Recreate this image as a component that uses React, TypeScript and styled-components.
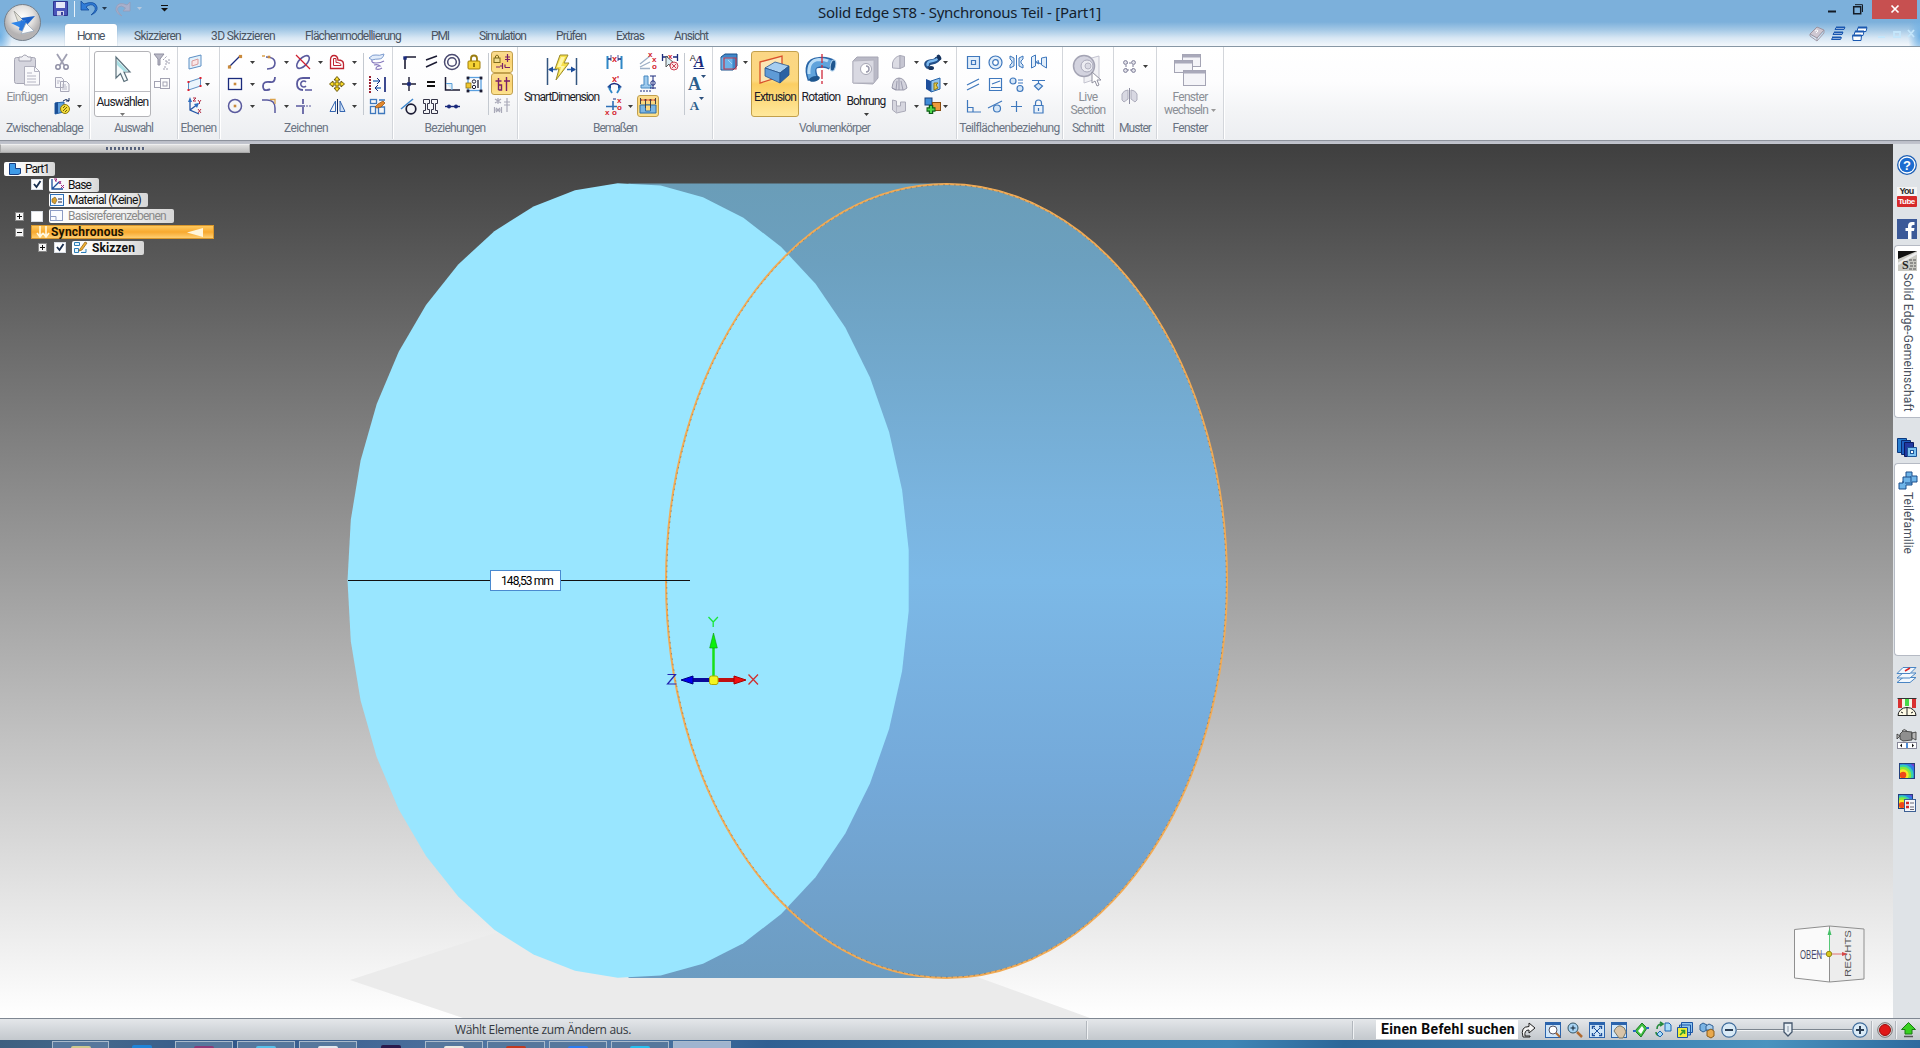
import React, { useLayoutEffect, useRef, useState } from "react";
import styled, { createGlobalStyle, css } from "styled-components";

const Global = createGlobalStyle`
  *{box-sizing:border-box}
  html,body{margin:0;padding:0;overflow:hidden}
  body{font-family:Roboto,"Liberation Sans",sans-serif;font-size:12px;color:#1e1e1e}
`;

/* ---------- text set to a given measure ---------- */
const FitSpan = styled.span`
  display: inline-block;
  white-space: pre;
`;
const Fit = ({ w, children }: { w: number; children: string }) => {
  const ref = useRef<HTMLSpanElement>(null);
  const [ls, setLs] = useState<number | null>(null);
  useLayoutEffect(() => {
    if (ref.current && ls === null) {
      const natural = ref.current.getBoundingClientRect().width;
      setLs((w - natural) / Math.max(1, children.length));
    }
  }, [w, children, ls]);
  return (
    <FitSpan ref={ref} style={ls === null ? undefined : { letterSpacing: ls + "px" }}>
      {children}
    </FitSpan>
  );
};

const Svg = styled.svg`
  display: block;
  flex: none;
  overflow: visible;
`;
type IcProps = { w?: number; h?: number; children: React.ReactNode };
const Ic = ({ w = 18, h, children }: IcProps) => (
  <Svg width={w} height={h ?? w} viewBox={`0 0 ${w} ${h ?? w}`} fill="none">
    {children}
  </Svg>
);
const Caret = ({ c = "#3c3c3c" }: { c?: string }) => (
  <Ic w={5} h={3}>
    <path d="M0 0h5L2.5 3z" fill={c} />
  </Ic>
);

/* ---------- frame ---------- */
const Window = styled.div`
  width: 1920px;
  height: 1048px;
  display: grid;
  grid-template-columns: 1920px;
  grid-template-rows: 46px 98px 874px 22px 8px;
  overflow: hidden;
`;
const Header = styled.header`
  display: grid;
  grid-template-columns: 46px 1fr auto;
  background: radial-gradient(ellipse 12px 26px at 100% 36px, #6fb0e4 0, #6fb0e400 100%),
    radial-gradient(ellipse 12px 26px at 0 36px, #6fb0e4 0, #6fb0e400 100%),
    linear-gradient(#7cb0db 0, #7cb0db 22px, #a5c9e6 30px, #d8e7f4 38px, #f4f8fc 46px);
`;
const Orb = styled.div`
  padding: 4px 0 0 4px;
`;
const HeadMid = styled.div`
  display: grid;
  grid-template-rows: 24px 22px;
`;
const QuickRow = styled.div`
  display: grid;
  grid-template-columns: 772px 283px;
`;
const Quick = styled.div`
  display: flex;
  align-items: center;
  height: 17px;
  padding-left: 7px;
`;
const Gap = styled.i<{ w: number }>`
  width: ${(p) => p.w}px;
  flex: none;
`;
const QuickLine = styled.i`
  width: 1px;
  height: 16px;
  background: #e8f2fa;
`;
const Title = styled.div`
  font: 15px/24px "Noto Sans", "Open Sans", sans-serif;
  color: #14202c;
`;
const Tabs = styled.nav`
  display: flex;
  padding-left: 19px;
`;
const Tab = styled.div<{ $on?: boolean }>`
  height: 23px;
  line-height: 25px;
  color: #4a5462;
  padding: 0 15px;
  ${(p) =>
    p.$on &&
    css`
      padding: 0 13px 0 12px;
      margin-right: 2px;
      background: #fff;
      border-radius: 3px 3px 0 0;
      box-shadow: 0 0 1px #6d8fae;
    `}
`;
const Controls = styled.div`
  width: 112px;
  display: grid;
  grid-template-rows: 18px 28px;
`;
const WinRow = styled.div`
  display: flex;
  align-items: center;
  padding-left: 20px;
`;
const CloseBox = styled.div`
  width: 45px;
  height: 19px;
  margin-left: 9px;
  background: #c75050;
  display: flex;
  align-items: center;
  justify-content: center;
`;
const DocRow = styled.div`
  display: flex;
  align-items: center;
  gap: 6px;
  padding: 3px 0 0 1px;
`;

/* ---------- ribbon ---------- */
const RibbonBar = styled.div`
  display: flex;
  border-top: 1px solid #8797a5;
  height: 98px;
  background: linear-gradient(#fff 0, #fdfdfe 35px, #f3f4f6 65px, #eceef1 93px, #8d929c 93px, #8d929c 94px, #b9bcc6 94px, #c6c9d1 98px);
`;
const GroupBox = styled.section<{ w: number }>`
  width: ${(p) => p.w}px;
  height: 92px;
  display: flex;
  flex-direction: column;
  border-right: 1px solid #d3d6db;
  box-shadow: 1px 0 0 #fff;
`;
const GroupBody = styled.div<{ pad: number }>`
  display: flex;
  height: 71px;
  padding: 4px 0 0 ${(p) => p.pad}px;
`;
const GroupLabel = styled.div`
  text-align: center;
  color: #6a7382;
  line-height: 21px;
  white-space: nowrap;
`;
const Group = ({ w, pad = 0, label, lw, children }: { w: number; pad?: number; label: string; lw: number; children: React.ReactNode }) => (
  <GroupBox w={w}>
    <GroupBody pad={pad}>{children}</GroupBody>
    <GroupLabel>
      <Fit w={lw}>{label}</Fit>
    </GroupLabel>
  </GroupBox>
);
const IconGrid = styled.div<{ cols: string; rows?: string }>`
  display: grid;
  grid-template-columns: ${(p) => p.cols};
  grid-auto-rows: ${(p) => p.rows ?? "22px"};
  height: 66px;
  align-items: center;
  justify-items: center;
`;
const On = styled.div`
  width: 22px;
  height: 22px;
  display: flex;
  align-items: center;
  justify-content: center;
  background: linear-gradient(#fbdc90, #fbd473 50%, #fde28f);
  border: 1px solid #c2a04c;
  border-radius: 3px;
`;
const Divider = styled.i`
  width: 1px;
  height: 62px;
  grid-row: 1 / span 3;
  background: #c4c9d0;
`;
const Big = styled.div<{ w: number; $on?: boolean; $off?: boolean }>`
  width: ${(p) => p.w}px;
  height: 66px;
  display: flex;
  flex-direction: column;
  align-items: center;
  padding-top: 2px;
  border: 1px solid transparent;
  border-radius: 3px;
  line-height: 13px;
  white-space: nowrap;
  color: ${(p) => (p.$off ? "#8b8f96" : "#1c1c28")};
  ${(p) =>
    p.$on &&
    css`
      background: linear-gradient(#fbd685 0, #fcd87e 45%, #fbce62 50%, #ffe89c 100%);
      border-color: #c2a04c;
    `}
`;
const BigText = styled.div<{ top?: number }>`
  height: 13px;
  margin-top: ${(p) => p.top ?? 2}px;
`;
const CaretDrop = styled.div`
  margin-top: 5px;
`;
const WechselRow = styled.div`
  display: flex;
  align-items: center;
  gap: 3px;
`;
const Select = styled.div`
  width: 57px;
  height: 66px;
  border: 1px solid #b4b4b8;
  border-radius: 3px;
  background: #fff;
  display: grid;
  grid-template-rows: 40px 1fr;
  justify-items: center;
`;
const SelectTop = styled.div`
  width: 55px;
  border-bottom: 1px solid #bdbdc2;
  padding: 4px 0 0 20px;
`;
const SelectBot = styled.div`
  display: flex;
  flex-direction: column;
  align-items: center;
  gap: 4px;
  line-height: 14px;
  padding-top: 3px;
  color: #1c1c28;
`;

/* ---------- icons: general ---------- */
const N = "#1a2a7c";
const V = "#5a5a9e";
const B = "#3f78bd";
const G = "#a9a9b8";
const Dot = ({ x, y, c = "#c98a3c", r = 1.3 }: { x: number; y: number; c?: string; r?: number }) => (
  <rect x={x - r} y={y - r} width={r * 2} height={r * 2} fill={c} />
);

const Paste = () => (
  <Ic w={28} h={32}>
    <rect x="1.500" y="3.500" width="21" height="26" rx="2" fill="#d5d5de" stroke="#a6a6b4" />
    <path d="M6 7V3h3q2.500-4 6 0h3v4z" fill="#f0f0f4" stroke="#a0a0ae" />
    <path d="M11.500 12.500h10l5 5v13.500h-15z" fill="#fafafc" stroke="#b0b0bd" />
    <path d="M21.500 12.500v5h5M14 19h5M14 22h9M14 25h9M14 28h9" stroke="#b4b4c2" />
  </Ic>
);
const Cut = () => (
  <Ic w={16}>
    <path d="M3 0l7 11M13 0L6 11" stroke="#a0a0b2" strokeWidth="1.800" />
    <circle cx="4" cy="13" r="2.200" stroke="#8e8ea4" strokeWidth="1.500" />
    <circle cx="12" cy="13" r="2.200" stroke="#8e8ea4" strokeWidth="1.500" />
  </Ic>
);
const Copy = () => (
  <Ic w={16}>
    <path d="M1.500 1.500h6l2 2v8h-8z M6.500 5.500h6l2.500 2.500v7.500h-8.500z" fill="#f6f6fa" stroke="#a8a8b8" />
    <path d="M8 9h4M8 11h5M8 13h5M3 5h3M3 7h2" stroke="#b8b8c6" />
  </Ic>
);
const CopyLink = () => (
  <Ic w={17}>
    <path d="M1 5l9-1v10l-9 2z" fill="#5f9fdc" stroke="#2763a8" />
    <path d="M1 5l3-1v11l-3 1z" fill="#1b4f96" />
    <path d="M9 3q3-3 6 0M15 0v3h-3" stroke="#122a5c" />
    <circle cx="11" cy="11" r="4.500" fill="#f2dc3a" stroke="#8f7b10" />
    <path d="M9 13l4-4M9 10l2-2M11 14l2-2" stroke="#705f08" />
  </Ic>
);
const Cursor = () => (
  <Ic w={16} h={28}>
    <path d="M1 1v21l4.500-4.500 3.500 8 3.500-1.500-3.500-8h6z" fill="#f4fafb" stroke="#5a6f7a" strokeWidth="1.200" />
    <path d="M2 4l11 11.500H9L2 9z" fill="#a9dfe4" />
  </Ic>
);
const Filter = () => (
  <Ic w={16}>
    <path d="M0 0h10L6 5v6H4V5z" fill="#b9b9c6" stroke="#8f8fa0" />
    <path d="M9 6l4-4M12 6v5M15 5v5M12 8h3M9 15h6M11 12v3" stroke="#a0a0b0" strokeDasharray="2 1" />
  </Ic>
);
const SelBoxes = () => (
  <Ic w={16} h={12}>
    <rect x=".5" y="3.500" width="6" height="6" stroke="#a2a2b2" />
    <rect x="6.500" y=".5" width="9" height="10" stroke="#a2a2b2" />
    <rect x="9" y="4" width="4" height="4" stroke="#a2a2b2" />
  </Ic>
);
const Plane1 = () => (
  <Ic w={16}>
    <path d="M2 4l12-3v11L2 15z" fill="#e3f1fb" stroke="#5d8fc4" />
    <path d="M5 7l6-2v5l-6 2z" fill="#fbe6e6" stroke="#d99c9c" />
  </Ic>
);
const Plane2 = () => (
  <Ic w={16}>
    <path d="M1.500 6l12-4v8L1.500 14z" fill="#eaf5fc" stroke="#5d8fc4" />
    <Dot x={1.5} y={6} c="#d23" r={1} /><Dot x={13.5} y={2} c="#d23" r={1} /><Dot x={13.5} y={10} c="#d23" r={1} /><Dot x={1.5} y={14} c="#d23" r={1} />
  </Ic>
);
const Csys = () => (
  <Ic w={18}>
    <path d="M4 3v10l9 4M4 13l8-6" stroke="#2355a6" strokeWidth="1.300" />
    <path d="M2 5l2-5 2 5zM8 7l5-1-2 5z" fill="#2d6fc0" />
    <path d="M7 1h3l-3 3h3M12 3l1.500 2L15 3M13.500 5v2M12 12l3 4M15 12l-3 4" stroke="#b23048" />
  </Ic>
);
/* drawing */
const Line = () => (<Ic w={16}><path d="M2 13L13 2" stroke={N} strokeWidth="1.300" /><Dot x={2.5} y={13} r={1.6} /><Dot x={13.5} y={2.5} r={1.6} /></Ic>);
const Arc = () => (<Ic w={16}><path d="M1 2h3" stroke="#dba24c" strokeWidth="1.500" /><path d="M5 3q9 0 9 6t-8 6" stroke={V} strokeWidth="1.600" /><Dot x={8} y={3} /></Ic>);
const Trim = () => (<Ic w={18}><ellipse cx="9" cy="9" rx="8" ry="4" transform="rotate(-45 9 9)" stroke={V} strokeWidth="1.600" /><path d="M2 2l14 14" stroke="#d02030" strokeWidth="1.300" /></Ic>);
const Offset = () => (<Ic w={16}><path d="M1.500 6q0-4.500 3.500-4.500t4 4.500q5.500 0 5.500 4v4.500h-13z" stroke="#c02430" strokeWidth="1.300" /><path d="M4.500 4.500v7h7.500q0-3-5-3v-4z" stroke="#c02430" /></Ic>);
const RectI = () => (<Ic w={16} h={14}><rect x="1.500" y="1.500" width="13" height="11" stroke={N} strokeWidth="1.300" /><Dot x={8} y={7} /></Ic>);
const Curve = () => (<Ic w={16}><path d="M14 1q0 6-5 5Q2 5 2 10t4 4q2 0 3-1" stroke={V} strokeWidth="1.800" /></Ic>);
const Slot = () => (<Ic w={17}><path d="M15 2H8q-6 0-6 6t6 6" stroke={V} strokeWidth="1.800" /><path d="M11 6a3 3 0 1 0 0 4M10 14h7" stroke={V} strokeWidth="1.500" /></Ic>);
const Move = () => (<Ic w={16}><path d="M8 .5l3 3.500H9v3h3V5l3.500 3L12 11V9H9v3h2l-3 3.500L5 12h2V9H4v2L.5 8 4 5v2h3V4H5z" fill="#f6d929" stroke="#6e5a10" /></Ic>);
const CircleI = () => (<Ic w={16}><circle cx="8" cy="8" r="6.500" stroke={V} strokeWidth="1.500" /><Dot x={8} y={8} /></Ic>);
const Fillet = () => (<Ic w={16}><path d="M1 2h5q8 0 8 8v5" stroke={V} strokeWidth="1.500" /><path d="M9 1.500h5V6" stroke="#dba24c" strokeWidth="1.300" /></Ic>);
const Extend = () => (<Ic w={16}><path d="M1 8h9M8 1v5M8 9v7" stroke={V} strokeWidth="1.700" /><path d="M11 8h5" stroke={V} strokeDasharray="2 1" /></Ic>);
const Mirror = () => (<Ic w={17}><path d="M6.500 3v10.500H1z" stroke="#3565b0" /><path d="M11 3v10.500H16z" stroke="#3565b0" fill="#cfe0f5" /><path d="M8.500 1v15" stroke="#102a60" /></Ic>);
const Surf = () => (<Ic w={18}><path d="M1 5q4-4 7-3t8-1q-1 5-5 5T4 7z" fill="#e2ecfa" stroke="#7d9ccf" /><path d="M4 7q-1 3 4 3t8-2M6 12q4-1 6 1-4 0-4 3 3 1 6-1" stroke="#8779bd" strokeWidth="1.200" /></Ic>);
const DimArr = () => (<Ic w={17}><path d="M1 0v17" stroke="#9b1f30" strokeWidth="2" strokeDasharray="2 1" /><path d="M16 1v15" stroke={N} strokeWidth="1.700" /><path d="M4 5h6M12 12H7" stroke={B} strokeWidth="1.500" /><path d="M8 2l3 3-3 3M9 9l-3 3 3 3" stroke={N} /></Ic>);
const Sketch = () => (<Ic w={17}><rect x="1.500" y="1.500" width="6" height="4" stroke={B} strokeWidth="1.300" /><rect x="1.500" y="8.500" width="5" height="7" stroke={B} strokeWidth="1.300" /><path d="M9.500 9v6.500h6V9z M10 2h6" stroke={B} strokeWidth="1.300" /><path d="M6 9l3-3 5-3 2 2-4 4-4 1z" fill="#e2872d" stroke="#8d4c10" strokeWidth=".7" /></Ic>);
/* relations */
const K = "#1c1c34";
const Connect = () => (<Ic w={16}><path d="M4 15V5q0-2 2-2h9" stroke={K} strokeWidth="1.600" /><Dot x={4} y={4} c={N} r={1.7} /></Ic>);
const Parallel = () => (<Ic w={16}><path d="M3 6l11-4M3 13l11-5" stroke={K} strokeWidth="1.500" /></Ic>);
const Concentric = () => (<Ic w={18}><circle cx="9" cy="9" r="7.500" stroke="#4a4a70" strokeWidth="1.500" /><circle cx="9" cy="9" r="4.300" stroke="#4a4a70" strokeWidth="1.500" /></Ic>);
const Lock = () => (<Ic w={14} h={16}><path d="M4 8V4.500a3 3 0 0 1 6 0V8" stroke="#9a7c10" strokeWidth="1.800" /><rect x="1" y="7" width="12" height="8" rx="1" fill="#f5d335" stroke="#a07d08" /><path d="M7 9v4" stroke="#6e5300" strokeWidth="1.500" /></Ic>);
const HV = () => (<Ic w={16}><path d="M1 8h14M8 1v14" stroke={K} strokeWidth="1.400" /><Dot x={8} y={8} c={N} r={1.8} /></Ic>);
const Equal = () => (<Ic w={12}><path d="M2 4h8M2 8h8" stroke="#111" strokeWidth="2" /></Ic>);
const Perp = () => (<Ic w={16}><path d="M1.500 1v13H16" stroke={K} strokeWidth="1.500" /><path d="M2 7.500h6V14" stroke="#5c9fd8" fill="#d8ebf8" /></Ic>);
const Rigid = () => (<Ic w={17}><rect x="2" y="1.500" width="13" height="13" stroke="#5aa0e0" strokeWidth="1.300" /><Dot x={2} y={2} c={K} r={1.4} /><Dot x={15} y={2} c={K} r={1.4} /><Dot x={2} y={15} c={K} r={1.4} /><Dot x={15} y={15} c={K} r={1.4} /><circle cx="8" cy="5.500" r="1.700" stroke={K} /><circle cx="8" cy="11" r="1.700" stroke={K} /><path d="M12 4v8" stroke={K} strokeWidth="1.300" /><rect x="0" y="7" width="5" height="5" fill="#f0c832" stroke="#8f7310" strokeWidth=".8" /></Ic>);
const Tangent = () => (<Ic w={17}><circle cx="10" cy="11" r="4.800" stroke={K} strokeWidth="1.700" /><path d="M0 11L12 1" stroke="#3d86cc" strokeWidth="1.500" /></Ic>);
const Symm = () => (<Ic w={17}><path d="M1.500 1.500h6v4h-2v6h2v4h-6v-3h2v-7h-2zM15.500 1.500h-6v4h2v6h-2v4h6v-3h-2v-7h2z" stroke="#333346" /></Ic>);
const Colin = () => (<Ic w={17}><path d="M1 8.500h15" stroke={N} strokeWidth="1.400" /><circle cx="5" cy="8.500" r="2" fill={N} /><circle cx="12" cy="8.500" r="2" fill={N} /></Ic>);
const OnLock = () => (<Ic w={18}><rect x="1" y="5" width="6" height="4.500" fill="#f1dc90" stroke="#7d6a1c" /><path d="M2.500 5V3q1.500-2 3 0v2" stroke="#7d6a1c" /><path d="M14.500 1v8M12 4h5M12 6.500h5M3 14h4M9.500 10v6M7 13h2M12 11.500v3M12 14.500h5" stroke="#7a2068" strokeWidth="1.200" /></Ic>);
const OnRel = () => (<Ic w={18}><path d="M5.500 3v12M2.500 6h6M5.500 10h3v5h-3M13.500 2v14M11 6h6" stroke="#7a2068" strokeWidth="1.400" /></Ic>);
const RelOff = () => (<Ic w={18}><path d="M5 1v6M2 2l6 4M8 2L2 6M14 1v14M11 5h6M11 8h6M1.500 10v6M8.500 10v6M2 13h6M3 11l4 4M7 11l-4 4" stroke={G} strokeWidth="1.200" /></Ic>);
/* dimensions */
const SmartDim = () => (
  <Ic w={32} h={32}>
    <path d="M1.500 4v27M30.500 4v27" stroke="#33557f" strokeWidth="1.500" />
    <path d="M3 15.500h8M21 15.500h8" stroke="#2d6db5" strokeWidth="1.600" />
    <path d="M2 15.500l5-3v6zM30 15.500l-5-3v6z" fill="#1c4c9a" />
    <path d="M14 1h8l-4 8h5L10 26l3-11H9z" fill="#f7e04b" stroke="#9a8a2c" />
    <path d="M15 3h4l-4 9h4l-6 9 2-8h-4z" fill="#fff6a8" />
  </Ic>
);
const XText = ({ x, y, t, s = 8 }: { x: number; y: number; t: string; s?: number }) => (
  <text x={x} y={y} fontSize={s} fontWeight="700" fill="#d41c2c" fontFamily="Liberation Sans">{t}</text>
);
const Dim1 = () => (<Ic w={17}><path d="M1.500 2v13M15.500 2v13" stroke="#2f87c6" strokeWidth="2" /><path d="M2 5h3M15 5h-3" stroke={N} strokeWidth="1.500" /><path d="M5 1v6M12 1v6" stroke={N} strokeWidth=".8" /><XText x={6} y={8} t="x" s={9} /></Ic>);
const Dim2 = () => (<Ic w={17}><XText x={6} y={6} t="x'" s={9} /><path d="M3 10q5-5 11 0" stroke={N} strokeWidth="1.300" /><path d="M1 11l4-3v5zM16 11l-4-3v5z" fill="#1c4c9a" /><path d="M3 12l3 5M14 12l-3 5" stroke="#2f87c6" strokeWidth="1.800" /></Ic>);
const Dim3 = () => (<Ic w={18}><path d="M1 9.500h11M8 4v9" stroke="#2f70b6" strokeWidth="1.600" /><path d="M8 2h3" stroke={N} /><XText x={12} y={6} t="x" /><XText x={12} y={12.5} t="o" /><XText x={0} y={18} t="x" /><XText x={7} y={18} t="o" /></Ic>);
const Dim4 = () => (<Ic w={18}><path d="M1 11L11 3M1 14l10-5M1 15.500h10" stroke="#9dafc6" strokeWidth="1.300" /><XText x={9} y={4} t="x" /><XText x={13} y={9} t="x" /><XText x={13} y={16} t="o" /></Ic>);
const Dim5 = () => (<Ic w={18}><path d="M5 1h4v9h3v3H2v-3h3z" fill="#9ecbee" stroke="#4688c0" /><path d="M11 1h6M14 1v13M11 13h6" stroke={N} /><circle cx="14" cy="8" r="2.200" stroke={N} /><path d="M1 16h12" stroke={N} strokeDasharray="2 1" /></Ic>);
const Dim6 = () => (<Ic w={18}><path d="M1 8h16v8H1z" fill="#7db6e2" stroke="#2c6da8" /><path d="M6.500 8h5v6h-5z" fill="#fbd981" stroke="#2c6da8" /><path d="M1.500 1v6M16.500 1v6M6.500 2v9M11.500 2v9" stroke="#444" /><path d="M2 3h14" stroke="#c23a2a" strokeDasharray="1.500 1" strokeWidth="1.400" /></Ic>);
const Dim7 = () => (<Ic w={18}><path d="M1.500 1v7M16.500 1v7M2 4h5M12 4h5" stroke={N} strokeWidth="1.300" /><XText x={7} y={6} t="x" /><path d="M5 3v11l3-3 2 4 2-1-2-4h3z" fill="#dceef4" stroke="#555" /><circle cx="13" cy="13" r="4" fill="#fbe4e6" stroke="#cc4454" /><path d="M11 11l4 4M15 11l-4 4" stroke="#cc4454" /></Ic>);
const Letter = styled.div<{ s: number }>`
  font: italic 700 ${(p) => p.s}px/18px "Liberation Serif", serif;
  color: ${N};
  display: flex;
  u { font-size: 16px; }
  small { font: 9px/10px "Liberation Sans", sans-serif; color: #222; margin-right: -2px; }
`;
const Letter2 = styled(Letter)`
  font-style: normal;
  color: #2b5f8c;
`;
/* solids */
const Cube = () => (<Ic w={18}><path d="M1 4l4-3h12v12l-4 4H1z" fill="#3f87c9" stroke="#1b4f8a" /><path d="M1.500 4.500h11v12h-11z" fill="#6db2e8" /><path d="M4 5h12v11H4z" stroke="#c0394a" strokeWidth="1.200" /><path d="M8 7l4 4" stroke="#a8d6f8" /></Ic>);
const Extrusion = () => (
  <Ic w={34} h={32}>
    <path d="M2 8L24 2v20L2 29z" fill="#fbe6b4" stroke="#d8502c" strokeWidth="1.300" />
    <path d="M7 14l10-6 14 4-9 7z" fill="#a6cef0" stroke="#27568f" strokeWidth=".8" />
    <path d="M7 14l15 5v10L7 22z" fill="#5f9bd6" stroke="#27568f" strokeWidth=".8" />
    <path d="M22 19l9-7v9l-9 8z" fill="#2b62a4" stroke="#27568f" strokeWidth=".8" />
  </Ic>
);
const Rotation = () => (
  <Ic w={32} h={32}>
    <path d="M8 25Q2 9 14 8.500q8-1 13 2.500" stroke="#2a66a8" strokeWidth="11" />
    <path d="M7.500 24Q3 10 14 8.500q7-1 12 2" stroke="#5fa3dc" strokeWidth="8" />
    <path d="M4 20Q3 6 14 5.500q6 0 9 1.500" stroke="#b9dcf6" strokeWidth="3" />
    <ellipse cx="28" cy="11.500" rx="2.600" ry="5.600" transform="rotate(12 28 11.500)" fill="#1f568f" stroke="#a9cdec" />
    <ellipse cx="9.500" cy="25" rx="5.500" ry="2.600" fill="#1e568f" transform="rotate(-15 9 25)" />
    <path d="M17 0v30" stroke="#d0283a" strokeWidth="1.300" strokeDasharray="9 2 3 2" />
  </Ic>
);
const Hole = () => (
  <Ic w={30} h={32}>
    <path d="M2 7l4-4h21v21l-5 6-20-1z" fill="#b9b9c6" stroke="#a6a6b4" />
    <path d="M2 7l21-1v23H2z" fill="#d9d9e2" stroke="#b4b4c0" />
    <circle cx="15" cy="15" r="5.500" fill="#fff" stroke="#a6a6b4" />
    <path d="M15 12a3 3 0 1 1 0 6" stroke="#9a9aac" strokeWidth="1.500" />
  </Ic>
);
const GSolid = ({ k }: { k: number }) => (
  <Ic w={16}>
    {k === 0 && <><path d="M1.500 14V9Q3 3 9 1.500v13z" fill="#dcdce4" stroke="#aaaab8" /><path d="M9 1.500l4.500 1v10l-4.500 2z" fill="#c6c6d2" stroke="#aaaab8" /></>}
    {k === 1 && <><path d="M1 12Q2 2 8 2t8 10l-3 2H5z" fill="#d2d2dc" stroke="#9c9cac" /><path d="M8 2v12M5 14L6 5M12 14L10 5M1 12l4 2" stroke="#9090a4" strokeWidth=".8" /></>}
    {k === 2 && <><path d="M1.500 2l4 1v5h4V4h5v9l-9 2-4-3z" fill="#d6d6df" stroke="#aaaab8" /><path d="M5.500 8v7" stroke="#b9b9c6" /></>}
  </Ic>
);
const Sweep = () => (<Ic w={17}><path d="M4 13Q-1 9 6 8t7-5" stroke="#234f88" strokeWidth="5.500" /><path d="M3 12q-2-4 4-5t5-3" stroke="#7dbaf0" strokeWidth="2.500" /><ellipse cx="14" cy="3.500" rx="2" ry="3" fill="#16345f" transform="rotate(-30 14 3.500)" /><ellipse cx="6" cy="14" rx="3" ry="2" fill="#16345f" /></Ic>);
const Box3 = () => (<Ic w={17}><path d="M1 3l5 2v11l-5-3z" fill="#1e4f9c" /><path d="M6 5l9-3v11l-9 3z" fill="#8fc2ee" stroke="#2763a8" /><path d="M9 7h4l-2 2 2 3-4 2z" fill="#e8cf4c" stroke="#8d7a1a" /></Ic>);
const BoxPlus = () => (<Ic w={18}><rect x="1" y="1" width="7" height="7" fill="#3f8cd8" stroke="#173f7c" /><rect x="8.500" y="5.500" width="8" height="8" fill="#ee9a3c" stroke="#8a4c10" /><path d="M7 8v9M2.500 12.500h9" stroke="#0f5f18" strokeWidth="4.500" /><path d="M7 9v7M3.500 12.500h7" stroke="#4fd84c" strokeWidth="2" /></Ic>);
/* face relations */
const F = [
  <path key="0" d="M2.500 2.500h12v12h-12zM6.500 6.500h4v4h-4z" stroke={B} fill="#e2eefa" strokeWidth="1.200" />,
  <g key="1" stroke={B} strokeWidth="1.200"><circle cx="8.500" cy="8.500" r="6.500" fill="#e2eefa" /><circle cx="8.500" cy="8.500" r="2.800" fill="#fff" /></g>,
  <path key="2" d="M8.500 1v15M2 2l4 2v8l-4 2v-3l2-2V7L2 5zM15 2l-4 2v8l4 2v-3l-2-2V7l2-2z" stroke={B} fill="#d5e6f7" />,
  <path key="3" d="M1.500 3l4-2v11l-4 2zM11.500 4l5-1v11l-5-3zM5 7l6 3M8 6l1 4-4-2" stroke={B} fill="#e2eefa" />,
  <path key="4" d="M2 9L14 3M2 14l12-6" stroke={B} strokeWidth="1.300" />,
  <path key="5" d="M2.500 2.500h12v12h-12zM5 8l8-3M4 11.500h11" stroke={B} strokeWidth="1.200" />,
  <g key="6" stroke={B} strokeWidth="1.200" fill="#d5e6f7"><circle cx="5" cy="5" r="3" /><circle cx="12" cy="12.500" r="3" /><path d="M10 4h5M10 7h5" /></g>,
  <path key="7" d="M2 4.500h13M8.500 5v2M4.500 10l4-3 4 3-4 4z" stroke={B} fill="#d5e6f7" strokeWidth="1.200" />,
  <path key="8" d="M2.500 2v12H16M3 9.500h5V14" stroke={B} strokeWidth="1.200" />,
  <g key="9" stroke={B} strokeWidth="1.200"><circle cx="10" cy="10.500" r="3.500" fill="#d5e6f7" /><path d="M1 10l14-7" /></g>,
  <path key="10" d="M3 8.500h11M8.500 3v11" stroke={B} strokeWidth="1.200" />,
  <g key="11" stroke={B} strokeWidth="1.200"><path d="M5.500 8V5a3 3 0 0 1 6 0v3" /><path d="M4 7.500h9v7.500H4zM8.500 10v3" fill="#e8f1fb" /></g>,
];
const Live = () => (
  <Ic w={30} h={32}>
    <path d="M11 6l15-4v22l-15 5z" fill="#f1f1f5" stroke="#c4c4d0" />
    <circle cx="11" cy="12" r="10.500" fill="#d3d3df" stroke="#a4a4b4" strokeWidth="1.500" />
    <circle cx="14" cy="12" r="6" fill="#ececf2" stroke="#a9a9ba" />
    <circle cx="15" cy="12" r="3" fill="#dadae4" stroke="#b4b4c2" />
    <path d="M19 18v11l3-2 2 5 2-1-2-5h4z" fill="#fff" stroke="#90909f" />
  </Ic>
);
const Pattern = () => (<Ic w={13}><g stroke="#7c7c96" fill="#e4e4ec"><path d="M3 3h7v7H3z" fill="none" strokeDasharray="2 1" /><circle cx="2.500" cy="2.500" r="1.900" /><circle cx="10.500" cy="2.500" r="1.900" /><circle cx="2.500" cy="10.500" r="1.900" /><circle cx="10.500" cy="10.500" r="1.900" /></g></Ic>);
const MirrorG = () => (<Ic w={17}><path d="M1 12V6q2-4 6-4v9l-4 3zM16 12V6q-2-4-6-4v9l4 3z" fill="#d8d8e2" stroke="#adadbc" /><path d="M8.500 0v16" stroke="#8c8ca0" /></Ic>);
const WinI = ({ x, y }: { x: number; y: number }) => (
  <g><rect x={x + 0.5} y={y + 0.5} width={x === 9 ? 22 : 18} height={x === 9 ? 15 : 12} fill="#f4f4f8" stroke="#a4a4b4" /><path d={`M${x + 1} ${y + 2}h${x === 9 ? 21 : 17}`} stroke="#a9a9ba" strokeWidth="3" /></g>
);
const Windows = () => (<Ic w={33} h={32}><WinI x={8} y={0} /><WinI x={0} y={6} /><WinI x={9} y={16} /></Ic>);

const E = () => <i />;

const Ribbon = () => (
  <RibbonBar>
    <Group w={90} pad={2} label="Zwischenablage" lw={77}>
      <Big w={50} $off><Paste /><BigText top={5}><Fit w={41}>Einfügen</Fit></BigText></Big>
      <IconGrid cols="20px 14px"><Cut /><E /><Copy /><E /><CopyLink /><Caret /></IconGrid>
    </Group>
    <Group w={88} pad={4} label="Auswahl" lw={39}>
      <Select>
        <SelectTop><Cursor /></SelectTop>
        <SelectBot><Fit w={52}>Auswählen</Fit><Caret c="#777" /></SelectBot>
      </Select>
      <IconGrid cols="22px"><Filter /><SelBoxes /></IconGrid>
    </Group>
    <Group w={42} pad={8} label="Ebenen" lw={36}>
      <IconGrid cols="18px 6px"><Plane1 /><E /><Plane2 /><Caret /><Csys /><E /></IconGrid>
    </Group>
    <Group w={173} pad={5} label="Zeichnen" lw={44}>
      <IconGrid cols="20px 14px 20px 14px 20px 14px 20px 14px">
        <Line /><Caret /><Arc /><Caret /><Trim /><Caret /><Offset /><Caret />
        <RectI /><Caret /><Curve /><E /><Slot /><E /><Move /><Caret />
        <CircleI /><Caret /><Fillet /><Caret /><Extend /><E /><Mirror /><Caret />
      </IconGrid>
      <IconGrid cols="5px 22px"><Divider /><Surf /><DimArr /><Sketch /></IconGrid>
    </Group>
    <Group w={125} pad={5} label="Beziehungen" lw={61}>
      <IconGrid cols="22px 21px 22px 22px">
        <Connect /><Parallel /><Concentric /><Lock />
        <HV /><Equal /><Perp /><Rigid />
        <Tangent /><Symm /><Colin /><E />
      </IconGrid>
      <IconGrid cols="6px 22px"><Divider /><On><OnLock /></On><On><OnRel /></On><RelOff /></IconGrid>
    </Group>
    <Group w={195} label="Bemaßen" lw={44}>
      <Big w={87}><SmartDim /><BigText top={5}><Fit w={75}>SmartDimension</Fit></BigText></Big>
      <IconGrid cols="18px 14px 22px 22px">
        <Dim1 /><E /><Dim4 /><Dim7 />
        <Dim2 /><E /><Dim5 /><E />
        <Dim3 /><Caret /><On><Dim6 /></On><E />
      </IconGrid>
      <IconGrid cols="6px 20px">
        <Divider />
        <Letter s={17}><small>A</small><u>A</u></Letter>
        <Letter2 s={18}>A<Caret c="#2b4f7c" /></Letter2>
        <Letter2 s={13}>A<Caret c="#2b4f7c" /></Letter2>
      </IconGrid>
    </Group>
    <Group w={244} pad={5} label="Volumenkörper" lw={71}>
      <IconGrid cols="22px 11px"><Cube /><Caret /></IconGrid>
      <Big w={48} $on><Extrusion /><BigText top={5}><Fit w={42}>Extrusion</Fit></BigText></Big>
      <Big w={44}><Rotation /><BigText top={5}><Fit w={39}>Rotation</Fit></BigText></Big>
      <Big w={46}><Hole /><BigText top={9}><Fit w={39}>Bohrung</Fit></BigText><CaretDrop><Caret /></CaretDrop></Big>
      <IconGrid cols="20px 14px 20px 5px">
        <GSolid k={0} /><Caret /><Sweep /><Caret />
        <GSolid k={1} /><E /><Box3 /><Caret />
        <GSolid k={2} /><Caret /><BoxPlus /><Caret />
      </IconGrid>
    </Group>
    <Group w={106} pad={6} label="Teilflächenbeziehung" lw={100}>
      <IconGrid cols="repeat(4,21.500px)">{F.map((f, i) => <Ic key={i} w={17}>{f}</Ic>)}</IconGrid>
    </Group>
    <Group w={51} label="Schnitt" lw={32}>
      <Big w={50} $off><Live /><BigText top={5}><Fit w={19}>Live</Fit></BigText><BigText top={0}><Fit w={35}>Section</Fit></BigText></Big>
    </Group>
    <Group w={43} pad={5} label="Muster" lw={32}>
      <IconGrid cols="20px 13px" rows="30px"><Pattern /><Caret /><MirrorG /></IconGrid>
    </Group>
    <Group w={67} label="Fenster" lw={35}>
      <Big w={66} $off><Windows /><BigText top={5}><Fit w={35}>Fenster</Fit></BigText><WechselRow><Fit w={44}>wechseln</Fit><Caret c="#999" /></WechselRow></Big>
    </Group>
  </RibbonBar>
);

/* ---------- viewport ---------- */
const Main = styled.main`
  display: grid;
  grid-template-columns: 1893px 27px;
`;
const View = styled.div`
  position: relative;
  height: 874px;
  overflow: hidden;
  background: linear-gradient(#3f3f3f, #fff);
`;
const Scene = styled.svg`
  position: absolute;
  inset: 0;
`;
const DimBox = styled.div`
  position: absolute;
  left: 490px;
  top: 426px;
  width: 71px;
  height: 21px;
  border: 1px solid #4a8ad0;
  background: #fff;
  line-height: 20px;
  padding-left: 10px;
  color: #000;
`;
const Panel = styled.div`
  position: relative;
  width: 250px;
`;
const Grip = styled.div`
  height: 9px;
  background: linear-gradient(#e0e0e0, #bdbdbd);
  border: 1px solid #a9a9a9;
  border-top-color: #eee;
  display: flex;
  justify-content: center;
  padding-top: 2px;
`;
const GripDots = styled.i`
  width: 39px;
  height: 3px;
  background: repeating-linear-gradient(90deg, #56617a 0 2px, #d6d6d6 2px 4px);
`;
const Tree = styled.div`
  padding-top: 8px;
`;
const TreeRow = styled.div<{ pad: number }>`
  display: flex;
  align-items: center;
  height: 15.800px;
  padding-left: ${(p) => p.pad}px;
`;
const Chip = styled.div<{ w: number; $dim?: boolean; $bold?: boolean }>`
  width: ${(p) => p.w}px;
  height: 14px;
  display: flex;
  align-items: center;
  gap: 4px;
  padding-left: 1px;
  border-radius: 2px;
  background: linear-gradient(90deg, #fff, #f2f2f2 60%, #d6d6d6);
  color: ${(p) => (p.$dim ? "#8a8a8a" : "#111")};
  font-weight: ${(p) => (p.$bold ? 700 : 400)};
  line-height: 14px;
`;
const Check = styled.div`
  width: 12px;
  height: 11px;
  background: #fff;
  border: 1px solid #d8dde4;
  margin-right: 6px;
`;
const Expander = styled.div`
  width: 9px;
  height: 9px;
  background: #f4f4f4;
  border: 1px solid #888;
  margin-right: 7px;
`;
const SyncBar = styled.div`
  width: 183px;
  height: 14px;
  display: flex;
  align-items: center;
  gap: 2px;
  padding: 0 10px 0 5px;
  border: 1px solid #d9972c;
  background: linear-gradient(#ffc95e, #f8a92f 50%, #ffcf72);
  font-weight: 700;
  color: #1a1200;
  > span { flex: none; }
  > svg:last-child { margin-left: auto; }
`;
const Tick = () => (<Check><Ic w={10} h={9}><path d="M2 4l2.500 3L8.500 1" stroke="#1a3050" strokeWidth="1.900" /></Ic></Check>);
const Plus = ({ minus }: { minus?: boolean }) => (<Expander><Ic w={7}><path d={minus ? "M1 3.500h5" : "M1 3.500h5M3.500 1v5"} stroke="#111" /></Ic></Expander>);

const facets = (cx: number, cy: number, rx: number, ry: number, n: number) =>
  Array.from({ length: n }, (_, i) => {
    const a = Math.PI + (i * 2 * Math.PI) / n;
    return `${(cx + rx * Math.cos(a)).toFixed(1)},${(cy + ry * Math.sin(a)).toFixed(1)}`;
  }).join(" ");

const Model = () => (
  <Scene width="1893" height="874" viewBox="0 144 1893 874" fill="none">
    <defs>
      <linearGradient id="side" x1="0" y1="184" x2="0" y2="978" gradientUnits="userSpaceOnUse">
        <stop offset="0" stopColor="#6a9db8" />
        <stop offset=".1" stopColor="#6ca0bf" />
        <stop offset=".25" stopColor="#73aacf" />
        <stop offset=".4" stopColor="#7ab4df" />
        <stop offset=".5" stopColor="#7cb9e7" />
        <stop offset=".6" stopColor="#79b2e1" />
        <stop offset=".75" stopColor="#74a9d9" />
        <stop offset=".9" stopColor="#70a1cb" />
        <stop offset="1" stopColor="#6c9cc1" />
      </linearGradient>
    </defs>
    <path d="M350 980L495 933L940 960L980 978L1090 1018H463z" fill="#ebebeb" />
    <path d="M628.500 183.500H946.500A280.500 397 0 0 1 946.500 978H628.500z" fill="url(#side)" />
    <polygon points={facets(628.5, 580.5, 281, 397.5, 41)} fill="#99e6ff" />
    <ellipse cx="946.500" cy="581" rx="280.500" ry="397" stroke="#f2ab55" strokeWidth="2" />
    <ellipse cx="946.500" cy="581" rx="279.700" ry="396.200" stroke="#3a4c5c" strokeWidth=".6" strokeDasharray="1.500 4" opacity=".75" />
    <path d="M348 580.500H690" stroke="#111" />
    <path d="M713.500 678V645" stroke="#18e018" strokeWidth="2.500" />
    <path d="M713.500 633l3.800 15h-7.600z" fill="#0cf00c" stroke="#0a9a0a" strokeWidth=".6" />
    <path d="M712 680H690" stroke="#0a0a9a" strokeWidth="4" />
    <path d="M681 680l12-4v8z" fill="#0000f0" stroke="#000080" />
    <path d="M716 680h20" stroke="#c01010" strokeWidth="4" />
    <path d="M746 680l-12-4v8z" fill="#f01010" stroke="#a00" />
    <rect x="709.500" y="676" width="8.500" height="8.500" rx="2" fill="#f5f520" stroke="#b0a800" />
    <path d="M708.500 617l4.700 5 4.700-5M713.200 622v5" stroke="#19e63a" strokeWidth="1.300" />
    <path d="M748.500 674.500l9.500 10M758 674.500l-9.500 10" stroke="#d03030" strokeWidth="1.300" />
    <path d="M667.500 674.500h8l-8 9.500h9" stroke="#2424b0" strokeWidth="1.200" />
    <g stroke="#8f8f8f">
      <path d="M1794.500 929.500l35-3.500v56l-35-4z" fill="#fafafa" />
      <path d="M1829.500 926l34.500 3v50l-34.500 3z" fill="#ededed" />
    </g>
    <path d="M1829.500 954v-24" stroke="#58c878" /><path d="M1829.500 928l2 7h-4z" fill="#46c068" />
    <path d="M1829 954h-16" stroke="#7c7cd0" /><path d="M1830 954h16" stroke="#e07070" /><path d="M1848 954l-6-2v4z" fill="#d84848" />
    <text x="1800" y="958.500" fontSize="12" fill="#4c4c64" fontFamily="Liberation Sans" textLength="22" lengthAdjust="spacingAndGlyphs">OBEN</text>
    <text transform="translate(1850.500 977) rotate(-90)" fontSize="9" fill="#555" fontFamily="Liberation Sans" textLength="47" lengthAdjust="spacingAndGlyphs">RECHTS</text>
    <circle cx="1829" cy="954" r="2.700" fill="#d8c820" stroke="#958a18" />
  </Scene>
);

/* ---------- sidebar ---------- */
const Side = styled.aside`
  background: #dfe3e7;
  display: flex;
  flex-direction: column;
  align-items: center;
  padding-top: 11px;
`;
const SideTab = styled.div<{ h: number; top?: number }>`
  align-self: stretch;
  height: ${(p) => p.h}px;
  flex: none;
  margin-left: 1px;
  background: #fff;
  border: 1px solid #b5bac4;
  border-right: 0;
  border-radius: 4px 0 0 4px;
  display: flex;
  flex-direction: column;
  align-items: center;
  padding-top: ${(p) => p.top ?? 5}px;
`;
const VText = styled.div`
  writing-mode: vertical-rl;
  font-size: 12px;
  color: #4a5260;
  margin-top: 2px;
  line-height: 18px;
`;
const VGap = styled.i<{ h: number }>`
  height: ${(p) => p.h}px;
  flex: none;
`;
const VFit = ({ h, children }: { h: number; children: string }) => {
  const ref = useRef<HTMLSpanElement>(null);
  const [ls, setLs] = useState<number | null>(null);
  useLayoutEffect(() => {
    if (ref.current && ls === null) setLs((h - ref.current.getBoundingClientRect().height) / children.length);
  }, [h, children, ls]);
  return <FitSpan ref={ref} style={ls === null ? undefined : { letterSpacing: ls + "px" }}>{children}</FitSpan>;
};
const YouTube = styled.div`
  width: 20px;
  display: grid;
  grid-template-rows: 9px 11px;
  text-align: center;
  font: 700 9px/9px "Liberation Sans Narrow", "Liberation Sans", sans-serif;
  letter-spacing: -0.800px;
  color: #2a2a2a;
  background: #f4f4f4;
  b { background: #d62a2a; color: #fff; line-height: 11px; border-radius: 1px; font-size: 8px; letter-spacing: -0.500px; }
`;
const Rainbow = ({ s }: { s: number }) => (
  <g>
    <rect x=".5" y=".5" width={s} height={s} fill="#5a3ac8" />
    <clipPath id={"rb" + s}><rect x="1" y="1" width={s - 1} height={s - 1} /></clipPath>
    <g clipPath={`url(#rb${s})`}>
      <circle cx="4" cy={s - 3} r={s * 1.05} fill="#7a38c8" /><circle cx="4" cy={s - 3} r={s * 0.9} fill="#2f7ce8" /><circle cx="4" cy={s - 3} r={s * 0.7} fill="#35d0b0" /><circle cx="4" cy={s - 3} r={s * 0.55} fill="#8ae83a" /><circle cx="4" cy={s - 3} r={s * 0.38} fill="#f8e828" /><circle cx="4" cy={s - 3} r={s * 0.22} fill="#f04818" />
    </g>
    <rect x=".5" y=".5" width={s} height={s} stroke="#24407c" />
  </g>
);
const Sidebar = () => (
  <Side>
    <Ic w={20}><circle cx="10" cy="10" r="9.300" fill="#fff" stroke="#1d5fb4" strokeWidth="1.300" /><circle cx="10" cy="10" r="7.300" fill="#1c6cd0" /><text x="10" y="14.500" textAnchor="middle" fontSize="13" fontWeight="700" fill="#fff" fontFamily="Liberation Sans">?</text></Ic>
    <VGap h={12} />
    <YouTube><span>You</span><b>Tube</b></YouTube>
    <VGap h={12} />
    <Ic w={20}><rect width="20" height="20" fill="#3b5998" /><path d="M11 20v-8H8.500V9H11V7q0-4 4-4h2.500v3H16q-1.500 0-1.500 1.500V9h3l-.5 3h-2.500v8z" fill="#fff" /></Ic>
    <VGap h={6} />
    <SideTab h={173}>
      <Ic w={19} h={20}><rect width="19" height="20" fill="#c9c9c2" /><path d="M0 0h19L0 8z" fill="#111" /><path d="M0 13L19 2" stroke="#eee" strokeWidth="2.500" /><text x="4" y="18" fontSize="12" fontWeight="700" fill="#222" fontFamily="Liberation Serif">S</text><path d="M11 9h7M12 12h6M12 15h6M11 18h7" stroke="#555" strokeDasharray="3 1" /></Ic>
      <VText><VFit h={139}>Solid Edge-Gemeinschaft</VFit></VText>
    </SideTab>
    <VGap h={20} />
    <Ic w={20}><path d="M.5.5h9v14h-9z" fill="#2a7fd0" stroke="#0c3a80" /><path d="M4.500 2.500h9v14h-9z" fill="#1d5fc0" stroke="#0c2a70" /><path d="M7.500 4.500h9v14h-9z" fill="#2138a0" stroke="#0c1a60" /><path d="M10.500 9.500h9v9h-9z" fill="#7cc0f0" stroke="#1c559a" /><rect x="13.500" y="12.500" width="3" height="3" fill="#fff" stroke="#1c559a" /></Ic>
    <VGap h={5} />
    <SideTab h={193} top={7}>
      <Ic w={20} h={19}><g fill="#6fb4e8" stroke="#1c4f8c"><path d="M8 1h6v4h5v6h-5v3h-6v4H1v-6h4V6h3z" /><path d="M8 6h5M7 12h7M13 5v6M5 12v-2" /></g></Ic>
      <VText><VFit h={62}>Teilefamilie</VFit></VText>
    </SideTab>
    <VGap h={10} />
    <Ic w={21} h={18}><g fill="#f2f8fd" stroke="#4a86c4"><path d="M1 16.500l6-5h13l-6 5z" /><path d="M1 12l6-5h13l-6 5z" /><path d="M1 7.500l6-6h13l-6 6z" /></g><path d="M9 5l5-3" stroke="#d22" strokeWidth="1.500" /></Ic>
    <VGap h={14} />
    <Ic w={20} h={19}><path d="M1 1h4v9H1zM15 1h4v9h-4z" fill="#d83030" /><path d="M5 1h10v8H5z" fill="#f4f4e8" /><path d="M8 1h4v7H8z" fill="#48d848" /><path d="M1 17.500a9 8 0 0 1 18 0z" fill="#fffbe6" stroke="#222" /><path d="M10 17V10M4 14l2 1M16 14l-2 1" stroke="#222" /><path d="M.5.500h19" stroke="#333" /></Ic>
    <VGap h={12} />
    <Ic w={20} h={20}><path d="M3 5l3-3 9 1v8l-9 1-3-2z" fill="#8f8f8f" stroke="#333" strokeWidth=".8" /><path d="M15 4l4-1v8l-4-2zM3 7L0 5v5zM5 2q2-3 5 0" fill="#b8b8b8" stroke="#333" strokeWidth=".8" /><rect x=".5" y="13.500" width="19" height="6" fill="#fff" stroke="#889" /><path d="M9 14h2v5H9z" fill="#4c8cd8" /><path d="M3 16.500l2-2v4zM17 16.500l-2-2v4z" fill="#111" /></Ic>
    <VGap h={14} />
    <Ic w={16}><Rainbow s={15} /></Ic>
    <VGap h={15} />
    <Ic w={18}><Rainbow s={14} /><rect x="6.500" y="5.500" width="11" height="12" fill="#f4f6fa" stroke="#3c5f94" /><path d="M8 9h3M8 13h3" stroke="#d02828" strokeWidth="2.500" /><path d="M12 9h4M12 13h4M12 15.500h4" stroke="#667" /></Ic>
  </Side>
);

/* ---------- status bar ---------- */
const Status = styled.footer`
  display: flex;
  align-items: center;
  border-top: 1px solid #7f8792;
  background: linear-gradient(#e4e7ea 0, #d3d7db 50%, #c3c8cd 100%);
  color: #33383e;
`;
const Hint = styled.div`
  width: 1086px;
  flex: none;
  padding-left: 455px;
  font: 12px/20px "Open Sans", "Noto Sans", sans-serif;
`;
const Bar = styled.i<{ gap: number; lead?: number }>`
  width: 2px;
  height: 18px;
  border-left: 1px solid #b2b7bd;
  border-right: 1px solid #f0f2f4;
  margin: 0 ${(p) => p.gap}px 0 ${(p) => p.lead ?? 0}px;
  flex: none;
`;
const Search = styled.div`
  width: 142px;
  height: 19px;
  background: #fff;
  padding-left: 5px;
  font: 700 14px/19px Roboto, sans-serif;
  color: #0a0a0a;
  flex: none;
`;
const StatusIcons = styled.div`
  display: flex;
  align-items: center;
  gap: 6px;
  margin-left: 2px;
  > :first-child { margin-right: 3px; }
`;
const Doc = ({ children }: { children?: React.ReactNode }) => (<Ic w={16}><rect x=".5" y=".5" width="15" height="15" fill="#cfe5f8" stroke="#2b64ad" /><path d="M1 2h14" stroke="#2b64ad" strokeWidth="2" />{children}</Ic>);
const Round = ({ plus }: { plus?: boolean }) => (<Ic w={16}><circle cx="8" cy="8" r="7.200" fill="#d9eaf6" stroke="#3f6c9c" strokeWidth="1.200" /><path d={plus ? "M4 8h8M8 4v8" : "M4 8h8"} stroke="#2c3e54" strokeWidth="2" /></Ic>);
const Track = styled.div`
  width: 115px;
  height: 17px;
  display: flex;
  align-items: center;
  padding-left: 46px;
  margin: 0 -6px;
  background: linear-gradient(#0000 8px, #7c858f 8px, #7c858f 9px, #f2f4f6 9px, #f2f4f6 10px, #0000 10px);
`;
const Taskbar = styled.div`
  display: flex;
  gap: 4px;
  padding-left: 52px;
  background: linear-gradient(100deg, #3d5f80 0, #44688c 5%, #33588a 12%, #5a7ea8 30%, #2f5f92 40%, #3a7aa8 52%, #3f86b6 64%, #2c6698 70%, #3c80b0 84%, #4a93bf 92%, #2d6a9e 100%);
`;
const Task = styled.div<{ c: string; w?: number; $flat?: boolean; $hi?: boolean }>`
  width: ${(p) => p.w ?? 58}px;
  height: 7px;
  margin: 1px ${(p) => (p.$flat ? 1 : 0)}px 0;
  display: flex;
  justify-content: center;
  padding-top: 4px;
  border: ${(p) => (p.$flat ? "0" : "1px solid #a9bacb")};
  border-bottom: 0;
  background: ${(p) => (p.$flat ? "none" : p.$hi ? "#9fb4cf" : "#56779c")};
  i { width: 20px; height: 4px; background: ${(p) => p.c}; border-radius: 2px 2px 0 0; }
`;
const tasks: { c: string; w?: number; flat?: boolean; hi?: boolean }[] = [
  { c: "#cfc98e", w: 57 }, { c: "#2084d8", flat: true, w: 56 }, { c: "#8c3a78" }, { c: "#58c0ea" }, { c: "#e4e8ee" },
  { c: "#2a1a4c", flat: true }, { c: "#eceae2" }, { c: "#c23a20" }, { c: "#2c7cf0" }, { c: "#28c0f0" }, { c: "#9fb4cf", hi: true },
];

export default function App() {
  return (
    <>
      <Global />
      <Window>
        <Header>
          <Orb>
            <Ic w={37}>
              <defs><radialGradient id="orb" cx=".5" cy=".35"><stop offset="0" stopColor="#fff" /><stop offset=".6" stopColor="#e4e2e0" /><stop offset="1" stopColor="#b5b3b4" /></radialGradient></defs>
              <circle cx="18.500" cy="18.500" r="18" fill="url(#orb)" stroke="#75808c" />
              <path d="M10 7l9 9-5 2z" fill="#e4e2d8" stroke="#9a9a96" strokeWidth=".8" />
              <path d="M17 14l14-2-8 9z" fill="#1c62c8" />
              <path d="M7 19l15-3-5 8z" fill="#2f86ea" />
              <path d="M17 16l7 3-3 9-6-2z" fill="#2a78dc" />
              <path d="M22 19l8 8-13 3z" fill="#fafcfe" stroke="#90a4b8" strokeWidth=".7" />
            </Ic>
          </Orb>
          <HeadMid>
            <QuickRow>
              <Quick>
                <Ic w={15}><path d="M.5.5h14v14h-14z" fill="#4a55b8" stroke="#2c3590" /><path d="M3 1h9v6H3z" fill="#e4e8f8" /><path d="M4 10h7v4.500H4z" fill="#d0d4ec" /><path d="M8 11h2v3H8z" fill="#3a449c" /></Ic>
                <Gap w={6} /><QuickLine /><Gap w={5} />
                <Ic w={17}><path d="M1 1v9h8L6 7q5-4 8-1t-1 7l-2 2q7-3 6-8-2-7-13-3z" fill="#2f7cd8" stroke="#144c9c" strokeWidth=".8" /></Ic>
                <Gap w={5} /><Caret c="#24384e" /><Gap w={8} />
                <Ic w={16}><path d="M15 1v9H8l2.500-3Q6 3.500 3.500 6T5 13l2 2Q0 12 1 7 3 0 12 4z" fill="#a9b0cc" stroke="#979db8" strokeWidth=".8" /></Ic>
                <Gap w={6} /><Caret c="#b6c9de" /><Gap w={19} />
                <Ic w={7}><path d="M0 .5h7" stroke="#111" /><path d="M0 3h7L3.500 6.500z" fill="#111" /></Ic>
              </Quick>
              <Title><Fit w={283}>Solid Edge ST8 - Synchronous Teil - [Part1]</Fit></Title>
            </QuickRow>
            <Tabs>
              <Tab $on><Fit w={27}>Home</Fit></Tab>
              <Tab><Fit w={47}>Skizzieren</Fit></Tab>
              <Tab><Fit w={64}>3D Skizzieren</Fit></Tab>
              <Tab><Fit w={96}>Flächenmodellierung</Fit></Tab>
              <Tab><Fit w={18}>PMI</Fit></Tab>
              <Tab><Fit w={47}>Simulation</Fit></Tab>
              <Tab><Fit w={30}>Prüfen</Fit></Tab>
              <Tab><Fit w={28}>Extras</Fit></Tab>
              <Tab><Fit w={34}>Ansicht</Fit></Tab>
            </Tabs>
          </HeadMid>
          <Controls>
            <WinRow>
              <Ic w={8} h={12}><path d="M0 8.500h8" stroke="#141c26" strokeWidth="2" /></Ic>
              <Gap w={17} />
              <Ic w={10}><path d="M.7 2.700h7v7h-7z" stroke="#141c26" strokeWidth="1.500" /><path d="M2 .7h7.500V8" stroke="#141c26" /></Ic>
              <CloseBox><Ic w={8} h={8}><path d="M.5.5l7 7M7.500.5l-7 7" stroke="#fff" strokeWidth="1.700" /></Ic></CloseBox>
            </WinRow>
            <DocRow>
              <Ic w={16}><path d="M1 8l7-7 7 3-7 8z" fill="#cfc8d2" stroke="#9b94a0" /><path d="M1 8v2l7 5 7-8V4M8 12v3" stroke="#a49da9" /><path d="M6 5q2-2 3 0l-2 2" stroke="#fff" /></Ic>
              <Ic w={15}><g fill="#fff" stroke="#1a58b0"><path d="M5 1.500h9l-1 2H4zM3 6.500h9l-1 2H2zM1.500 11.500h9l-1 2H.5z" /></g><path d="M5 1.500h9M3 6.500h9M1 11.500h9" stroke="#1a58b0" strokeWidth="1.800" /></Ic>
              <Ic w={16}><g fill="#fff" stroke="#1a58b0"><path d="M6 1.500h9l-1 4H5zM3 5.500h9l-1 4H2zM.5 9.500h9l-.5 5H1z" /></g><path d="M6 1.500h9M3 5.500h9M.5 9.500h9" stroke="#1a58b0" strokeWidth="1.800" /></Ic>
              <Ic w={40} h={12}><path d="M4 9h7M20 4h6v5h-6zM34 2l6 7M40 2l-6 7" stroke="#c4e6fb" strokeWidth="1.800" /></Ic>
            </DocRow>
          </Controls>
        </Header>
        <Ribbon />
        <Main>
          <View>
            <Model />
            <DimBox><Fit w={52}>148,53 mm</Fit></DimBox>
            <Panel>
              <Grip><GripDots /></Grip>
              <Tree>
                <TreeRow pad={4}><Chip w={51}><Gap w={-1} /><Ic w={12}><path d="M.5.5h6v5h5v5L9 11.500H.5z" fill="#3f9be8" stroke="#173f84" /></Ic><Fit w={24}>Part1</Fit></Chip></TreeRow>
                <TreeRow pad={31}><Tick /><Chip w={50}><Ic w={14} h={13}><path d="M2 1v10h11M2 11l7-7" stroke="#1d4f9c" strokeWidth="1.300" /><path d="M4 1h3L5 3h2M9 3l2 3M11 3L9 6M11 7l3 3M14 7l-3 3" stroke="#a02880" /></Ic><Fit w={23}>Base</Fit></Chip></TreeRow>
                <TreeRow pad={49}><Chip w={99}><Ic w={14} h={13}><rect x=".5" y=".5" width="13" height="11" fill="#f4f9ff" stroke="#2d6fb8" /><path d="M2 5l3-2 2 3-2 4-3-2z" fill="#d8a030" stroke="#76551a" strokeWidth=".6" /><path d="M8 5h4M8 8h4" stroke="#224" /></Ic><Fit w={73}>Material (Keine)</Fit></Chip></TreeRow>
                <TreeRow pad={15}><Plus /><Check /><Chip w={125} $dim><Ic w={14} h={12}><rect x=".5" y=".5" width="12" height="10" fill="#fafcff" stroke="#8c9cc4" /><path d="M1 6.500h5v4" stroke="#8c9cc4" /></Ic><Fit w={98}>Basisreferenzebenen</Fit></Chip></TreeRow>
                <TreeRow pad={15}><Plus minus /><SyncBar><Ic w={12} h={12}><path d="M3 0v10M9 0v10M0 7l3 4 3-4M6 7l3 4 3-4" stroke="#fff8e0" strokeWidth="1.600" /></Ic><Fit w={73}>Synchronous</Fit><Ic w={16} h={9}><path d="M0 4.500L16 0v9z" fill="#fff6dc" /></Ic></SyncBar></TreeRow>
                <TreeRow pad={38}><Plus /><Tick /><Chip w={72} $bold><Ic w={15} h={13}><path d="M1.500 1.500h5v3h-5zM1.500 7.500h4v4h-4zM8 11.500h5V8" stroke="#2d7fb8" fill="#e6f4fc" /><path d="M7 8l5-7 2 1-5 7-3 1z" fill="#f2b030" stroke="#8a5a10" strokeWidth=".7" /></Ic><Fit w={43}>Skizzen</Fit></Chip></TreeRow>
              </Tree>
            </Panel>
          </View>
          <Sidebar />
        </Main>
        <Status>
          <Hint><Fit w={176}>Wählt Elemente zum Ändern aus.</Fit></Hint>
          <Bar gap={264} />
          <Bar gap={22} />
          <Search><Fit w={134}>Einen Befehl suchen</Fit></Search>
          <StatusIcons>
            <Ic w={16}><path d="M9 1l6 5-6 5V8q-5 0-4 6h5v1H3Q0 4.500 9 4.500z" fill="#f4f4f4" stroke="#222" /></Ic>
            <Doc><circle cx="8" cy="8" r="4" fill="#fff" stroke="#556" /><path d="M11 11l4 4" stroke="#b06a30" strokeWidth="2" /></Doc>
            <Ic w={16}><circle cx="6" cy="6" r="5" fill="#a8d4f4" stroke="#356" /><path d="M3.500 6h5M6 3.500v5" stroke="#123" /><path d="M10 10l5 5" stroke="#b06a30" strokeWidth="2.500" /></Ic>
            <Doc><path d="M5 6l6 6M11 6l-6 6" stroke="#1c4f9c" /><path d="M3.500 7V4.500H6M10 4.500h2.500V7M12.500 11v2.500H10M6 13.500H3.500V11" stroke="#1c4f9c" strokeWidth="1.400" /></Doc>
            <Doc><path d="M3 9q3-6 7-5t5 6l-3 6H8z" fill="#d9c4a8" stroke="#776" /></Doc>
            <Ic w={16}><path d="M2 9L9 1l5 5-6 9z" fill="#3fc040" stroke="#1a7a24" /><path d="M5 9l4-5 2 3-3 5z" fill="#fff" /><path d="M0 9h3M13 6h3" stroke="#2a68c0" strokeWidth="2" /></Ic>
            <Ic w={16}><path d="M2 7q0-5 5-5M5 0l3 2-3 2M6 14q-5 0-5-4" stroke="#258a3c" strokeWidth="1.600" /><path d="M10 1h4l2 2v6h-6zM2 12l3-3 3 3-3 3z" fill="#a8dcf8" stroke="#1c64b0" /></Ic>
            <Ic w={16}><path d="M4.500.500h11v10h-11zM2.500 3h11v10h-11z" fill="#8cc4f0" stroke="#1c55a4" /><path d="M.5 5.500h10v10H.5z" fill="#f2ec3a" stroke="#1c55a4" /><path d="M3 13l4-4M4 8.500h3.500V12" stroke="#2a9a30" strokeWidth="1.600" /></Ic>
            <Ic w={16}><g stroke="#2f5f94"><path d="M1 3l3-2 4 2v5l-4 2-3-2z" fill="#7ab4e4" /><path d="M7 4l3-2 4 2v4H7z" fill="#a6cdee" /><path d="M8 9l4-2 3 2v5l-3 2-4-2z" fill="#e8a84c" stroke="#8a5c1c" /></g></Ic>
            <Round />
            <Track><Ic w={10} h={15}><path d="M1 1h8v9l-4 4-4-4z" fill="#e6edf3" stroke="#44566c" strokeWidth="1.300" /><path d="M5 4v6" stroke="#8c9aaa" /></Ic></Track>
            <Round plus />
            <Bar gap={-2} lead={-3} />
            <Ic w={16}><circle cx="8" cy="8" r="7.300" fill="#ddd" stroke="#777" /><circle cx="8" cy="8" r="5.500" fill="#e01818" stroke="#9a0c0c" /></Ic>
            <Bar gap={-2} lead={-4} />
            <Ic w={15} h={16}><path d="M7.500.5L14.500 7.500H11V12H4V7.500H.5z" fill="#38d020" stroke="#1a7a14" /><path d="M3 14.500h9" stroke="#555" strokeWidth="1.500" /></Ic>
          </StatusIcons>
        </Status>
        <Taskbar>
          {tasks.map((t, i) => (
            <Task key={i} c={t.c} w={t.w} $flat={t.flat} $hi={t.hi}><i /></Task>
          ))}
        </Taskbar>
      </Window>
    </>
  );
}
